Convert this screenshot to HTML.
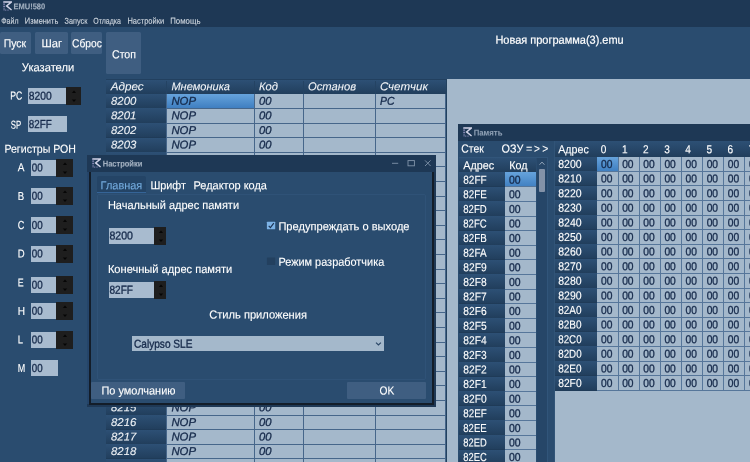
<!DOCTYPE html>
<html><head><meta charset="utf-8"><title>EMU!580</title>
<style>
html,body{margin:0;padding:0;background:#2a4c6f;}
body{width:750px;height:462px;overflow:hidden;position:relative;font-family:"Liberation Sans",sans-serif;}
#r{position:absolute;left:0;top:0;width:750px;height:462px;overflow:hidden;}
#r div,#r svg{position:absolute;}
#r svg.t{left:0;top:0;will-change:transform;font-family:"Liberation Sans",sans-serif;text-rendering:geometricPrecision;white-space:pre;pointer-events:none;}
#r svg.t text{white-space:pre;}
</style></head><body><div id="r">
<div style="left:0.00px;top:0.00px;width:750.00px;height:462.00px;background:#2a4c6f;"></div>
<div style="left:0.00px;top:0.00px;width:750.00px;height:27.00px;background:#1e3855;"></div>
<svg style="left:3.0px;top:1.0px" width="9" height="10" viewBox="0 0 9 10"><path d="M0.3 0.9H8.6L3.6 4.9L8.6 9" fill="none" stroke="#d2d4e8" stroke-width="1.45" stroke-linejoin="miter"/><path d="M1.1 1.6V9.6" stroke="#8d8fba" stroke-width="1.7" stroke-dasharray="0.9 0.8" fill="none"/><path d="M2 9.1H6" stroke="#8d8fba" stroke-width="1" stroke-dasharray="0.9 0.8" fill="none"/></svg>
<div style="left:0.00px;top:32.40px;width:30.80px;height:21.20px;background:#3f5e81;border-radius:1.5px;"></div>
<div style="left:34.50px;top:32.40px;width:33.00px;height:21.20px;background:#3f5e81;border-radius:1.5px;"></div>
<div style="left:71.00px;top:32.40px;width:31.00px;height:21.20px;background:#3f5e81;border-radius:1.5px;"></div>
<div style="left:106.00px;top:32.40px;width:35.00px;height:41.60px;background:#3f5e81;border-radius:1.5px;"></div>
<div style="left:27.90px;top:87.90px;width:38.20px;height:15.90px;background:#a8bbcf;"></div>
<div style="left:66.10px;top:86.70px;width:14.60px;height:18.00px;background:#1e1e1e;"></div>
<svg style="left:70.80px;top:88.70px" width="6" height="14" viewBox="0 0 6 14"><path d="M0.9 4.1L3 1.4L5.1 4.1Z" fill="#060606"/><path d="M0.9 10.4L3 12.9L5.1 10.4Z" fill="#060606"/></svg>
<div style="left:27.90px;top:116.40px;width:39.40px;height:15.60px;background:#a8bbcf;"></div>
<div style="left:30.80px;top:159.70px;width:25.00px;height:16.10px;background:#a8bbcf;"></div>
<div style="left:55.80px;top:158.50px;width:17.10px;height:18.20px;background:#1e1e1e;"></div>
<svg style="left:61.75px;top:160.60px" width="6" height="14" viewBox="0 0 6 14"><path d="M0.9 4.1L3 1.4L5.1 4.1Z" fill="#060606"/><path d="M0.9 10.4L3 12.9L5.1 10.4Z" fill="#060606"/></svg>
<div style="left:30.80px;top:188.00px;width:25.00px;height:16.10px;background:#a8bbcf;"></div>
<div style="left:55.80px;top:186.80px;width:17.10px;height:18.20px;background:#1e1e1e;"></div>
<svg style="left:61.75px;top:188.90px" width="6" height="14" viewBox="0 0 6 14"><path d="M0.9 4.1L3 1.4L5.1 4.1Z" fill="#060606"/><path d="M0.9 10.4L3 12.9L5.1 10.4Z" fill="#060606"/></svg>
<div style="left:30.80px;top:217.10px;width:25.00px;height:16.10px;background:#a8bbcf;"></div>
<div style="left:55.80px;top:215.90px;width:17.10px;height:18.20px;background:#1e1e1e;"></div>
<svg style="left:61.75px;top:218.00px" width="6" height="14" viewBox="0 0 6 14"><path d="M0.9 4.1L3 1.4L5.1 4.1Z" fill="#060606"/><path d="M0.9 10.4L3 12.9L5.1 10.4Z" fill="#060606"/></svg>
<div style="left:30.80px;top:245.70px;width:25.00px;height:16.10px;background:#a8bbcf;"></div>
<div style="left:55.80px;top:244.50px;width:17.10px;height:18.20px;background:#1e1e1e;"></div>
<svg style="left:61.75px;top:246.60px" width="6" height="14" viewBox="0 0 6 14"><path d="M0.9 4.1L3 1.4L5.1 4.1Z" fill="#060606"/><path d="M0.9 10.4L3 12.9L5.1 10.4Z" fill="#060606"/></svg>
<div style="left:30.80px;top:276.80px;width:25.00px;height:16.10px;background:#a8bbcf;"></div>
<div style="left:55.80px;top:275.60px;width:17.10px;height:18.20px;background:#1e1e1e;"></div>
<svg style="left:61.75px;top:277.70px" width="6" height="14" viewBox="0 0 6 14"><path d="M0.9 4.1L3 1.4L5.1 4.1Z" fill="#060606"/><path d="M0.9 10.4L3 12.9L5.1 10.4Z" fill="#060606"/></svg>
<div style="left:30.80px;top:303.00px;width:25.00px;height:16.10px;background:#a8bbcf;"></div>
<div style="left:55.80px;top:301.80px;width:17.10px;height:18.20px;background:#1e1e1e;"></div>
<svg style="left:61.75px;top:303.90px" width="6" height="14" viewBox="0 0 6 14"><path d="M0.9 4.1L3 1.4L5.1 4.1Z" fill="#060606"/><path d="M0.9 10.4L3 12.9L5.1 10.4Z" fill="#060606"/></svg>
<div style="left:30.80px;top:331.70px;width:25.00px;height:16.10px;background:#a8bbcf;"></div>
<div style="left:55.80px;top:330.50px;width:17.10px;height:18.20px;background:#1e1e1e;"></div>
<svg style="left:61.75px;top:332.60px" width="6" height="14" viewBox="0 0 6 14"><path d="M0.9 4.1L3 1.4L5.1 4.1Z" fill="#060606"/><path d="M0.9 10.4L3 12.9L5.1 10.4Z" fill="#060606"/></svg>
<div style="left:30.90px;top:360.30px;width:27.20px;height:15.60px;background:#a8bbcf;"></div>
<div style="left:446.20px;top:78.60px;width:303.80px;height:383.40px;background:#22415f;"></div>
<div style="left:446.50px;top:79.40px;width:303.50px;height:382.60px;background:#a4b8cb;"></div>
<div style="left:106.40px;top:79.70px;width:339.30px;height:382.30px;background:#a4b8cb;"></div>
<div style="left:106.40px;top:79.70px;width:339.30px;height:14.10px;background:linear-gradient(#2d5075,#213e5c);"></div>
<div style="left:106.40px;top:78.90px;width:339.30px;height:0.80px;background:#22405f;"></div>
<div style="left:166.20px;top:80.70px;width:1.00px;height:13.10px;background:#244363;"></div>
<div style="left:254.10px;top:80.70px;width:1.00px;height:13.10px;background:#244363;"></div>
<div style="left:303.00px;top:80.70px;width:1.00px;height:13.10px;background:#244363;"></div>
<div style="left:375.00px;top:80.70px;width:1.00px;height:13.10px;background:#244363;"></div>
<div style="left:106.40px;top:93.80px;width:60.30px;height:14.60px;background:linear-gradient(#2d5075,#213e5c);"></div>
<div style="left:166.70px;top:93.80px;width:87.90px;height:14.60px;background:linear-gradient(#66a3dc,#3f7fc1);"></div>
<div style="left:166.70px;top:107.95px;width:279.00px;height:0.75px;background:#46668a;"></div>
<div style="left:106.40px;top:107.95px;width:60.30px;height:0.75px;background:#1f3b58;"></div>
<div style="left:106.40px;top:108.40px;width:60.30px;height:14.60px;background:linear-gradient(#2d5075,#213e5c);"></div>
<div style="left:166.70px;top:122.55px;width:279.00px;height:0.75px;background:#46668a;"></div>
<div style="left:106.40px;top:122.55px;width:60.30px;height:0.75px;background:#1f3b58;"></div>
<div style="left:106.40px;top:123.00px;width:60.30px;height:14.60px;background:linear-gradient(#2d5075,#213e5c);"></div>
<div style="left:166.70px;top:137.15px;width:279.00px;height:0.75px;background:#46668a;"></div>
<div style="left:106.40px;top:137.15px;width:60.30px;height:0.75px;background:#1f3b58;"></div>
<div style="left:106.40px;top:137.60px;width:60.30px;height:14.60px;background:linear-gradient(#2d5075,#213e5c);"></div>
<div style="left:166.70px;top:151.75px;width:279.00px;height:0.75px;background:#46668a;"></div>
<div style="left:106.40px;top:151.75px;width:60.30px;height:0.75px;background:#1f3b58;"></div>
<div style="left:106.40px;top:152.20px;width:60.30px;height:14.60px;background:linear-gradient(#2d5075,#213e5c);"></div>
<div style="left:106.40px;top:166.35px;width:60.30px;height:0.75px;background:#1f3b58;"></div>
<div style="left:166.70px;top:166.35px;width:279.00px;height:0.75px;background:#46668a;"></div>
<div style="left:106.40px;top:166.80px;width:60.30px;height:14.60px;background:linear-gradient(#2d5075,#213e5c);"></div>
<div style="left:106.40px;top:180.95px;width:60.30px;height:0.75px;background:#1f3b58;"></div>
<div style="left:166.70px;top:180.95px;width:279.00px;height:0.75px;background:#46668a;"></div>
<div style="left:106.40px;top:181.40px;width:60.30px;height:14.60px;background:linear-gradient(#2d5075,#213e5c);"></div>
<div style="left:106.40px;top:195.55px;width:60.30px;height:0.75px;background:#1f3b58;"></div>
<div style="left:166.70px;top:195.55px;width:279.00px;height:0.75px;background:#46668a;"></div>
<div style="left:106.40px;top:196.00px;width:60.30px;height:14.60px;background:linear-gradient(#2d5075,#213e5c);"></div>
<div style="left:106.40px;top:210.15px;width:60.30px;height:0.75px;background:#1f3b58;"></div>
<div style="left:166.70px;top:210.15px;width:279.00px;height:0.75px;background:#46668a;"></div>
<div style="left:106.40px;top:210.60px;width:60.30px;height:14.60px;background:linear-gradient(#2d5075,#213e5c);"></div>
<div style="left:106.40px;top:224.75px;width:60.30px;height:0.75px;background:#1f3b58;"></div>
<div style="left:166.70px;top:224.75px;width:279.00px;height:0.75px;background:#46668a;"></div>
<div style="left:106.40px;top:225.20px;width:60.30px;height:14.60px;background:linear-gradient(#2d5075,#213e5c);"></div>
<div style="left:106.40px;top:239.35px;width:60.30px;height:0.75px;background:#1f3b58;"></div>
<div style="left:166.70px;top:239.35px;width:279.00px;height:0.75px;background:#46668a;"></div>
<div style="left:106.40px;top:239.80px;width:60.30px;height:14.60px;background:linear-gradient(#2d5075,#213e5c);"></div>
<div style="left:106.40px;top:253.95px;width:60.30px;height:0.75px;background:#1f3b58;"></div>
<div style="left:166.70px;top:253.95px;width:279.00px;height:0.75px;background:#46668a;"></div>
<div style="left:106.40px;top:254.40px;width:60.30px;height:14.60px;background:linear-gradient(#2d5075,#213e5c);"></div>
<div style="left:106.40px;top:268.55px;width:60.30px;height:0.75px;background:#1f3b58;"></div>
<div style="left:166.70px;top:268.55px;width:279.00px;height:0.75px;background:#46668a;"></div>
<div style="left:106.40px;top:269.00px;width:60.30px;height:14.60px;background:linear-gradient(#2d5075,#213e5c);"></div>
<div style="left:106.40px;top:283.15px;width:60.30px;height:0.75px;background:#1f3b58;"></div>
<div style="left:166.70px;top:283.15px;width:279.00px;height:0.75px;background:#46668a;"></div>
<div style="left:106.40px;top:283.60px;width:60.30px;height:14.60px;background:linear-gradient(#2d5075,#213e5c);"></div>
<div style="left:106.40px;top:297.75px;width:60.30px;height:0.75px;background:#1f3b58;"></div>
<div style="left:166.70px;top:297.75px;width:279.00px;height:0.75px;background:#46668a;"></div>
<div style="left:106.40px;top:298.20px;width:60.30px;height:14.60px;background:linear-gradient(#2d5075,#213e5c);"></div>
<div style="left:106.40px;top:312.35px;width:60.30px;height:0.75px;background:#1f3b58;"></div>
<div style="left:166.70px;top:312.35px;width:279.00px;height:0.75px;background:#46668a;"></div>
<div style="left:106.40px;top:312.80px;width:60.30px;height:14.60px;background:linear-gradient(#2d5075,#213e5c);"></div>
<div style="left:106.40px;top:326.95px;width:60.30px;height:0.75px;background:#1f3b58;"></div>
<div style="left:166.70px;top:326.95px;width:279.00px;height:0.75px;background:#46668a;"></div>
<div style="left:106.40px;top:327.40px;width:60.30px;height:14.60px;background:linear-gradient(#2d5075,#213e5c);"></div>
<div style="left:106.40px;top:341.55px;width:60.30px;height:0.75px;background:#1f3b58;"></div>
<div style="left:166.70px;top:341.55px;width:279.00px;height:0.75px;background:#46668a;"></div>
<div style="left:106.40px;top:342.00px;width:60.30px;height:14.60px;background:linear-gradient(#2d5075,#213e5c);"></div>
<div style="left:106.40px;top:356.15px;width:60.30px;height:0.75px;background:#1f3b58;"></div>
<div style="left:166.70px;top:356.15px;width:279.00px;height:0.75px;background:#46668a;"></div>
<div style="left:106.40px;top:356.60px;width:60.30px;height:14.60px;background:linear-gradient(#2d5075,#213e5c);"></div>
<div style="left:106.40px;top:370.75px;width:60.30px;height:0.75px;background:#1f3b58;"></div>
<div style="left:166.70px;top:370.75px;width:279.00px;height:0.75px;background:#46668a;"></div>
<div style="left:106.40px;top:371.20px;width:60.30px;height:14.60px;background:linear-gradient(#2d5075,#213e5c);"></div>
<div style="left:106.40px;top:385.35px;width:60.30px;height:0.75px;background:#1f3b58;"></div>
<div style="left:166.70px;top:385.35px;width:279.00px;height:0.75px;background:#46668a;"></div>
<div style="left:106.40px;top:385.80px;width:60.30px;height:14.60px;background:linear-gradient(#2d5075,#213e5c);"></div>
<div style="left:106.40px;top:399.95px;width:60.30px;height:0.75px;background:#1f3b58;"></div>
<div style="left:166.70px;top:399.95px;width:279.00px;height:0.75px;background:#46668a;"></div>
<div style="left:106.40px;top:400.40px;width:60.30px;height:14.60px;background:linear-gradient(#2d5075,#213e5c);"></div>
<div style="left:166.70px;top:414.55px;width:279.00px;height:0.75px;background:#46668a;"></div>
<div style="left:106.40px;top:414.55px;width:60.30px;height:0.75px;background:#1f3b58;"></div>
<div style="left:106.40px;top:415.00px;width:60.30px;height:14.60px;background:linear-gradient(#2d5075,#213e5c);"></div>
<div style="left:166.70px;top:429.15px;width:279.00px;height:0.75px;background:#46668a;"></div>
<div style="left:106.40px;top:429.15px;width:60.30px;height:0.75px;background:#1f3b58;"></div>
<div style="left:106.40px;top:429.60px;width:60.30px;height:14.60px;background:linear-gradient(#2d5075,#213e5c);"></div>
<div style="left:166.70px;top:443.75px;width:279.00px;height:0.75px;background:#46668a;"></div>
<div style="left:106.40px;top:443.75px;width:60.30px;height:0.75px;background:#1f3b58;"></div>
<div style="left:106.40px;top:444.20px;width:60.30px;height:14.60px;background:linear-gradient(#2d5075,#213e5c);"></div>
<div style="left:166.70px;top:458.35px;width:279.00px;height:0.75px;background:#46668a;"></div>
<div style="left:106.40px;top:458.35px;width:60.30px;height:0.75px;background:#1f3b58;"></div>
<div style="left:106.40px;top:458.80px;width:60.30px;height:14.60px;background:linear-gradient(#2d5075,#213e5c);"></div>
<div style="left:106.40px;top:472.95px;width:60.30px;height:0.75px;background:#1f3b58;"></div>
<div style="left:166.70px;top:472.95px;width:279.00px;height:0.75px;background:#46668a;"></div>
<div style="left:106.40px;top:473.40px;width:60.30px;height:14.60px;background:linear-gradient(#2d5075,#213e5c);"></div>
<div style="left:106.40px;top:487.55px;width:60.30px;height:0.75px;background:#1f3b58;"></div>
<div style="left:166.70px;top:487.55px;width:279.00px;height:0.75px;background:#46668a;"></div>
<div style="left:166.30px;top:93.80px;width:0.75px;height:368.20px;background:#46668a;"></div>
<div style="left:254.20px;top:93.80px;width:0.75px;height:368.20px;background:#46668a;"></div>
<div style="left:303.10px;top:93.80px;width:0.75px;height:368.20px;background:#46668a;"></div>
<div style="left:375.10px;top:93.80px;width:0.75px;height:368.20px;background:#46668a;"></div>
<div style="left:445.30px;top:93.80px;width:0.75px;height:368.20px;background:#46668a;"></div>
<svg class="t" width="750" height="462" viewBox="0 0 750 462"><text transform="matrix(0.8963,0.0005,0,1,13.50,9.29)" font-size="8.40" fill="#a3b1c1" font-weight="bold" stroke="#a3b1c1" stroke-width="0.12">EMU!580</text><text transform="matrix(0.8135,0.0005,0,1,1.30,23.66)" font-size="8.60" fill="#d3dae2" stroke="#d3dae2" stroke-width="0.10">Файл</text><text transform="matrix(0.8635,0.0005,0,1,24.80,23.66)" font-size="8.60" fill="#d3dae2" stroke="#d3dae2" stroke-width="0.10">Изменить</text><text transform="matrix(0.8476,0.0005,0,1,64.60,23.66)" font-size="8.60" fill="#d3dae2" stroke="#d3dae2" stroke-width="0.10">Запуск</text><text transform="matrix(0.8178,0.0005,0,1,93.20,23.66)" font-size="8.60" fill="#d3dae2" stroke="#d3dae2" stroke-width="0.10">Отладка</text><text transform="matrix(0.8727,0.0005,0,1,127.40,23.66)" font-size="8.60" fill="#d3dae2" stroke="#d3dae2" stroke-width="0.10">Настройки</text><text transform="matrix(0.9122,0.0005,0,1,170.20,23.66)" font-size="8.60" fill="#d3dae2" stroke="#d3dae2" stroke-width="0.10">Помощь</text><text transform="matrix(0.9002,0.0005,0,1,3.70,47.19)" font-size="11.60" fill="#fff" stroke="#fff" stroke-width="0.12">Пуск</text><text transform="matrix(0.9665,0.0005,0,1,41.40,47.19)" font-size="11.60" fill="#fff" stroke="#fff" stroke-width="0.12">Шаг</text><text transform="matrix(0.8836,0.0005,0,1,72.00,47.19)" font-size="11.60" fill="#fff" stroke="#fff" stroke-width="0.12">Сброс</text><text transform="matrix(0.9128,0.0005,0,1,112.00,58.29)" font-size="11.60" fill="#fff" stroke="#fff" stroke-width="0.12">Стоп</text><text transform="matrix(0.9476,0.0005,0,1,495.40,43.69)" font-size="11.60" fill="#fff" stroke="#fff" stroke-width="0.20">Новая программа(3).emu</text><text transform="matrix(0.9613,0.0005,0,1,21.80,71.29)" font-size="11.60" fill="#fff" stroke="#fff" stroke-width="0.12">Указатели</text><text transform="matrix(0.9120,0.0005,0,1,4.40,152.79)" font-size="11.60" fill="#fff" stroke="#fff" stroke-width="0.12">Регистры РОН</text><text transform="matrix(0.7509,0.0005,0,1,10.20,99.49)" font-size="11.60" fill="#fff" stroke="#fff" stroke-width="0.12">PC</text><text transform="matrix(0.8874,0.0005,0,1,28.80,99.64)" font-size="11.60" fill="#15294a" stroke="#15294a" stroke-width="0.34">8200</text><text transform="matrix(0.6720,0.0005,0,1,10.80,128.79)" font-size="11.60" fill="#fff" stroke="#fff" stroke-width="0.12">SP</text><text transform="matrix(0.8458,0.0005,0,1,28.80,127.99)" font-size="11.60" fill="#15294a" stroke="#15294a" stroke-width="0.34">82FF</text><text transform="matrix(0.8659,0.0005,0,1,17.70,171.29)" font-size="11.60" fill="#fff" stroke="#fff" stroke-width="0.12">A</text><text transform="matrix(0.8448,0.0005,0,1,31.70,171.54)" font-size="11.60" fill="#15294a" stroke="#15294a" stroke-width="0.34">00</text><text transform="matrix(0.8271,0.0005,0,1,17.70,199.89)" font-size="11.60" fill="#fff" stroke="#fff" stroke-width="0.12">B</text><text transform="matrix(0.8448,0.0005,0,1,31.70,199.84)" font-size="11.60" fill="#15294a" stroke="#15294a" stroke-width="0.34">00</text><text transform="matrix(0.7878,0.0005,0,1,17.70,228.99)" font-size="11.60" fill="#fff" stroke="#fff" stroke-width="0.12">C</text><text transform="matrix(0.8448,0.0005,0,1,31.70,228.94)" font-size="11.60" fill="#15294a" stroke="#15294a" stroke-width="0.34">00</text><text transform="matrix(0.8236,0.0005,0,1,17.70,257.59)" font-size="11.60" fill="#fff" stroke="#fff" stroke-width="0.12">D</text><text transform="matrix(0.8448,0.0005,0,1,31.70,257.54)" font-size="11.60" fill="#15294a" stroke="#15294a" stroke-width="0.34">00</text><text transform="matrix(0.7625,0.0005,0,1,17.70,286.59)" font-size="11.60" fill="#fff" stroke="#fff" stroke-width="0.12">E</text><text transform="matrix(0.8448,0.0005,0,1,31.70,288.64)" font-size="11.60" fill="#15294a" stroke="#15294a" stroke-width="0.34">00</text><text transform="matrix(0.8714,0.0005,0,1,17.70,314.99)" font-size="11.60" fill="#fff" stroke="#fff" stroke-width="0.12">H</text><text transform="matrix(0.8448,0.0005,0,1,31.70,314.84)" font-size="11.60" fill="#15294a" stroke="#15294a" stroke-width="0.34">00</text><text transform="matrix(0.8215,0.0005,0,1,17.70,343.39)" font-size="11.60" fill="#fff" stroke="#fff" stroke-width="0.12">L</text><text transform="matrix(0.8448,0.0005,0,1,31.70,343.54)" font-size="11.60" fill="#15294a" stroke="#15294a" stroke-width="0.34">00</text><text transform="matrix(0.7761,0.0005,0,1,17.70,372.09)" font-size="11.60" fill="#fff" stroke="#fff" stroke-width="0.12">M</text><text transform="matrix(0.8370,0.0005,0,1,31.80,371.89)" font-size="11.60" fill="#15294a" stroke="#15294a" stroke-width="0.34">00</text><text transform="matrix(1.0353,0.0005,0,1,110.70,90.19)" font-size="11.30" fill="#f2f5f8" font-style="italic" stroke="#f2f5f8" stroke-width="0.08">Адрес</text><text transform="matrix(0.9776,0.0005,0,1,171.40,90.19)" font-size="11.30" fill="#f2f5f8" font-style="italic" stroke="#f2f5f8" stroke-width="0.08">Мнемоника</text><text transform="matrix(0.9901,0.0005,0,1,259.00,90.19)" font-size="11.30" fill="#f2f5f8" font-style="italic" stroke="#f2f5f8" stroke-width="0.08">Код</text><text transform="matrix(0.9915,0.0005,0,1,308.00,90.19)" font-size="11.30" fill="#f2f5f8" font-style="italic" stroke="#f2f5f8" stroke-width="0.08">Останов</text><text transform="matrix(1.0256,0.0005,0,1,380.00,90.19)" font-size="11.30" fill="#f2f5f8" font-style="italic" stroke="#f2f5f8" stroke-width="0.08">Счетчик</text><text transform="matrix(1.0064,0.0005,0,1,111.00,104.69)" font-size="11.30" fill="#f2f5f8" font-style="italic" stroke="#f2f5f8" stroke-width="0.08">8200</text><text transform="matrix(1.0046,0.0005,0,1,171.40,104.69)" font-size="11.30" fill="#15294a" font-style="italic" stroke="#15294a" stroke-width="0.30">NOP</text><text transform="matrix(0.9945,0.0005,0,1,259.00,104.69)" font-size="11.30" fill="#15294a" font-style="italic" stroke="#15294a" stroke-width="0.30">00</text><text transform="matrix(0.9237,0.0005,0,1,380.00,104.69)" font-size="11.30" fill="#15294a" font-style="italic" stroke="#15294a" stroke-width="0.30">PC</text><text transform="matrix(1.0064,0.0005,0,1,111.00,119.29)" font-size="11.30" fill="#f2f5f8" font-style="italic" stroke="#f2f5f8" stroke-width="0.08">8201</text><text transform="matrix(1.0046,0.0005,0,1,171.40,119.29)" font-size="11.30" fill="#15294a" font-style="italic" stroke="#15294a" stroke-width="0.30">NOP</text><text transform="matrix(0.9945,0.0005,0,1,259.00,119.29)" font-size="11.30" fill="#15294a" font-style="italic" stroke="#15294a" stroke-width="0.30">00</text><text transform="matrix(1.0064,0.0005,0,1,111.00,133.89)" font-size="11.30" fill="#f2f5f8" font-style="italic" stroke="#f2f5f8" stroke-width="0.08">8202</text><text transform="matrix(1.0046,0.0005,0,1,171.40,133.89)" font-size="11.30" fill="#15294a" font-style="italic" stroke="#15294a" stroke-width="0.30">NOP</text><text transform="matrix(0.9945,0.0005,0,1,259.00,133.89)" font-size="11.30" fill="#15294a" font-style="italic" stroke="#15294a" stroke-width="0.30">00</text><text transform="matrix(1.0064,0.0005,0,1,111.00,148.49)" font-size="11.30" fill="#f2f5f8" font-style="italic" stroke="#f2f5f8" stroke-width="0.08">8203</text><text transform="matrix(1.0046,0.0005,0,1,171.40,148.49)" font-size="11.30" fill="#15294a" font-style="italic" stroke="#15294a" stroke-width="0.30">NOP</text><text transform="matrix(0.9945,0.0005,0,1,259.00,148.49)" font-size="11.30" fill="#15294a" font-style="italic" stroke="#15294a" stroke-width="0.30">00</text><text transform="matrix(1.0064,0.0005,0,1,111.00,411.29)" font-size="11.30" fill="#f2f5f8" font-style="italic" stroke="#f2f5f8" stroke-width="0.08">8215</text><text transform="matrix(1.0046,0.0005,0,1,171.40,411.29)" font-size="11.30" fill="#15294a" font-style="italic" stroke="#15294a" stroke-width="0.30">NOP</text><text transform="matrix(0.9945,0.0005,0,1,259.00,411.29)" font-size="11.30" fill="#15294a" font-style="italic" stroke="#15294a" stroke-width="0.30">00</text><text transform="matrix(1.0064,0.0005,0,1,111.00,425.89)" font-size="11.30" fill="#f2f5f8" font-style="italic" stroke="#f2f5f8" stroke-width="0.08">8216</text><text transform="matrix(1.0046,0.0005,0,1,171.40,425.89)" font-size="11.30" fill="#15294a" font-style="italic" stroke="#15294a" stroke-width="0.30">NOP</text><text transform="matrix(0.9945,0.0005,0,1,259.00,425.89)" font-size="11.30" fill="#15294a" font-style="italic" stroke="#15294a" stroke-width="0.30">00</text><text transform="matrix(1.0064,0.0005,0,1,111.00,440.49)" font-size="11.30" fill="#f2f5f8" font-style="italic" stroke="#f2f5f8" stroke-width="0.08">8217</text><text transform="matrix(1.0046,0.0005,0,1,171.40,440.49)" font-size="11.30" fill="#15294a" font-style="italic" stroke="#15294a" stroke-width="0.30">NOP</text><text transform="matrix(0.9945,0.0005,0,1,259.00,440.49)" font-size="11.30" fill="#15294a" font-style="italic" stroke="#15294a" stroke-width="0.30">00</text><text transform="matrix(1.0064,0.0005,0,1,111.00,455.09)" font-size="11.30" fill="#f2f5f8" font-style="italic" stroke="#f2f5f8" stroke-width="0.08">8218</text><text transform="matrix(1.0046,0.0005,0,1,171.40,455.09)" font-size="11.30" fill="#15294a" font-style="italic" stroke="#15294a" stroke-width="0.30">NOP</text><text transform="matrix(0.9945,0.0005,0,1,259.00,455.09)" font-size="11.30" fill="#15294a" font-style="italic" stroke="#15294a" stroke-width="0.30">00</text></svg>
<div style="left:458.10px;top:123.50px;width:291.90px;height:338.50px;background:#2a4c6f;"></div>
<div style="left:458.10px;top:123.50px;width:291.90px;height:17.50px;background:#1e3855;"></div>
<svg style="left:462.5px;top:127.3px" width="9" height="10" viewBox="0 0 9 10"><path d="M0.3 0.9H8.6L3.6 4.9L8.6 9" fill="none" stroke="#d2d4e8" stroke-width="1.45" stroke-linejoin="miter"/><path d="M1.1 1.6V9.6" stroke="#8d8fba" stroke-width="1.7" stroke-dasharray="0.9 0.8" fill="none"/><path d="M2 9.1H6" stroke="#8d8fba" stroke-width="1" stroke-dasharray="0.9 0.8" fill="none"/></svg>
<div style="left:459.20px;top:158.20px;width:77.20px;height:303.80px;background:#a4b8cb;"></div>
<div style="left:459.20px;top:158.20px;width:77.20px;height:14.00px;background:linear-gradient(#2d5075,#213e5c);"></div>
<div style="left:459.20px;top:172.20px;width:46.20px;height:14.60px;background:linear-gradient(#2d5075,#213e5c);"></div>
<div style="left:505.40px;top:172.20px;width:31.00px;height:14.60px;background:linear-gradient(#66a3dc,#3f7fc1);"></div>
<div style="left:505.40px;top:186.35px;width:31.00px;height:0.75px;background:#56769a;"></div>
<div style="left:459.20px;top:186.35px;width:46.20px;height:0.75px;background:#1f3b58;"></div>
<div style="left:459.20px;top:186.80px;width:46.20px;height:14.60px;background:linear-gradient(#2d5075,#213e5c);"></div>
<div style="left:505.40px;top:200.95px;width:31.00px;height:0.75px;background:#56769a;"></div>
<div style="left:459.20px;top:200.95px;width:46.20px;height:0.75px;background:#1f3b58;"></div>
<div style="left:459.20px;top:201.40px;width:46.20px;height:14.60px;background:linear-gradient(#2d5075,#213e5c);"></div>
<div style="left:505.40px;top:215.55px;width:31.00px;height:0.75px;background:#56769a;"></div>
<div style="left:459.20px;top:215.55px;width:46.20px;height:0.75px;background:#1f3b58;"></div>
<div style="left:459.20px;top:216.00px;width:46.20px;height:14.60px;background:linear-gradient(#2d5075,#213e5c);"></div>
<div style="left:505.40px;top:230.15px;width:31.00px;height:0.75px;background:#56769a;"></div>
<div style="left:459.20px;top:230.15px;width:46.20px;height:0.75px;background:#1f3b58;"></div>
<div style="left:459.20px;top:230.60px;width:46.20px;height:14.60px;background:linear-gradient(#2d5075,#213e5c);"></div>
<div style="left:505.40px;top:244.75px;width:31.00px;height:0.75px;background:#56769a;"></div>
<div style="left:459.20px;top:244.75px;width:46.20px;height:0.75px;background:#1f3b58;"></div>
<div style="left:459.20px;top:245.20px;width:46.20px;height:14.60px;background:linear-gradient(#2d5075,#213e5c);"></div>
<div style="left:505.40px;top:259.35px;width:31.00px;height:0.75px;background:#56769a;"></div>
<div style="left:459.20px;top:259.35px;width:46.20px;height:0.75px;background:#1f3b58;"></div>
<div style="left:459.20px;top:259.80px;width:46.20px;height:14.60px;background:linear-gradient(#2d5075,#213e5c);"></div>
<div style="left:505.40px;top:273.95px;width:31.00px;height:0.75px;background:#56769a;"></div>
<div style="left:459.20px;top:273.95px;width:46.20px;height:0.75px;background:#1f3b58;"></div>
<div style="left:459.20px;top:274.40px;width:46.20px;height:14.60px;background:linear-gradient(#2d5075,#213e5c);"></div>
<div style="left:505.40px;top:288.55px;width:31.00px;height:0.75px;background:#56769a;"></div>
<div style="left:459.20px;top:288.55px;width:46.20px;height:0.75px;background:#1f3b58;"></div>
<div style="left:459.20px;top:289.00px;width:46.20px;height:14.60px;background:linear-gradient(#2d5075,#213e5c);"></div>
<div style="left:505.40px;top:303.15px;width:31.00px;height:0.75px;background:#56769a;"></div>
<div style="left:459.20px;top:303.15px;width:46.20px;height:0.75px;background:#1f3b58;"></div>
<div style="left:459.20px;top:303.60px;width:46.20px;height:14.60px;background:linear-gradient(#2d5075,#213e5c);"></div>
<div style="left:505.40px;top:317.75px;width:31.00px;height:0.75px;background:#56769a;"></div>
<div style="left:459.20px;top:317.75px;width:46.20px;height:0.75px;background:#1f3b58;"></div>
<div style="left:459.20px;top:318.20px;width:46.20px;height:14.60px;background:linear-gradient(#2d5075,#213e5c);"></div>
<div style="left:505.40px;top:332.35px;width:31.00px;height:0.75px;background:#56769a;"></div>
<div style="left:459.20px;top:332.35px;width:46.20px;height:0.75px;background:#1f3b58;"></div>
<div style="left:459.20px;top:332.80px;width:46.20px;height:14.60px;background:linear-gradient(#2d5075,#213e5c);"></div>
<div style="left:505.40px;top:346.95px;width:31.00px;height:0.75px;background:#56769a;"></div>
<div style="left:459.20px;top:346.95px;width:46.20px;height:0.75px;background:#1f3b58;"></div>
<div style="left:459.20px;top:347.40px;width:46.20px;height:14.60px;background:linear-gradient(#2d5075,#213e5c);"></div>
<div style="left:505.40px;top:361.55px;width:31.00px;height:0.75px;background:#56769a;"></div>
<div style="left:459.20px;top:361.55px;width:46.20px;height:0.75px;background:#1f3b58;"></div>
<div style="left:459.20px;top:362.00px;width:46.20px;height:14.60px;background:linear-gradient(#2d5075,#213e5c);"></div>
<div style="left:505.40px;top:376.15px;width:31.00px;height:0.75px;background:#56769a;"></div>
<div style="left:459.20px;top:376.15px;width:46.20px;height:0.75px;background:#1f3b58;"></div>
<div style="left:459.20px;top:376.60px;width:46.20px;height:14.60px;background:linear-gradient(#2d5075,#213e5c);"></div>
<div style="left:505.40px;top:390.75px;width:31.00px;height:0.75px;background:#56769a;"></div>
<div style="left:459.20px;top:390.75px;width:46.20px;height:0.75px;background:#1f3b58;"></div>
<div style="left:459.20px;top:391.20px;width:46.20px;height:14.60px;background:linear-gradient(#2d5075,#213e5c);"></div>
<div style="left:505.40px;top:405.35px;width:31.00px;height:0.75px;background:#56769a;"></div>
<div style="left:459.20px;top:405.35px;width:46.20px;height:0.75px;background:#1f3b58;"></div>
<div style="left:459.20px;top:405.80px;width:46.20px;height:14.60px;background:linear-gradient(#2d5075,#213e5c);"></div>
<div style="left:505.40px;top:419.95px;width:31.00px;height:0.75px;background:#56769a;"></div>
<div style="left:459.20px;top:419.95px;width:46.20px;height:0.75px;background:#1f3b58;"></div>
<div style="left:459.20px;top:420.40px;width:46.20px;height:14.60px;background:linear-gradient(#2d5075,#213e5c);"></div>
<div style="left:505.40px;top:434.55px;width:31.00px;height:0.75px;background:#56769a;"></div>
<div style="left:459.20px;top:434.55px;width:46.20px;height:0.75px;background:#1f3b58;"></div>
<div style="left:459.20px;top:435.00px;width:46.20px;height:14.60px;background:linear-gradient(#2d5075,#213e5c);"></div>
<div style="left:505.40px;top:449.15px;width:31.00px;height:0.75px;background:#56769a;"></div>
<div style="left:459.20px;top:449.15px;width:46.20px;height:0.75px;background:#1f3b58;"></div>
<div style="left:459.20px;top:449.60px;width:46.20px;height:14.60px;background:linear-gradient(#2d5075,#213e5c);"></div>
<div style="left:505.40px;top:463.75px;width:31.00px;height:0.75px;background:#56769a;"></div>
<div style="left:459.20px;top:463.75px;width:46.20px;height:0.75px;background:#1f3b58;"></div>
<div style="left:459.20px;top:464.20px;width:46.20px;height:14.60px;background:linear-gradient(#2d5075,#213e5c);"></div>
<div style="left:505.40px;top:478.35px;width:31.00px;height:0.75px;background:#56769a;"></div>
<div style="left:459.20px;top:478.35px;width:46.20px;height:0.75px;background:#1f3b58;"></div>
<div style="left:536.50px;top:158.20px;width:10.70px;height:303.80px;background:#264668;"></div>
<div style="left:459.20px;top:157.20px;width:88.00px;height:0.90px;background:#31557a;"></div>
<div style="left:546.60px;top:157.20px;width:0.80px;height:304.80px;background:#31557a;"></div>
<svg style="left:538.6px;top:160.6px" width="6" height="5" viewBox="0 0 6 5"><path d="M0.6 3.7L3 1.1L5.4 3.7" fill="none" stroke="#a4b4c6" stroke-width="0.9"/></svg>
<div style="left:539.00px;top:168.80px;width:6.00px;height:22.80px;background:#8392a8;border-radius:1px;"></div>
<div style="left:553.60px;top:140.60px;width:1.20px;height:321.40px;background:#315477;"></div>
<div style="left:554.80px;top:141.00px;width:195.20px;height:250.20px;background:#a4b8cb;"></div>
<div style="left:554.80px;top:141.00px;width:195.20px;height:15.60px;background:linear-gradient(#2d5075,#213e5c);"></div>
<div style="left:554.80px;top:391.20px;width:195.20px;height:70.80px;background:#a4b8cb;"></div>
<div style="left:554.80px;top:156.60px;width:42.00px;height:14.60px;background:linear-gradient(#2d5075,#213e5c);"></div>
<div style="left:596.80px;top:156.60px;width:21.13px;height:14.60px;background:linear-gradient(#66a3dc,#3f7fc1);"></div>
<div style="left:596.80px;top:170.75px;width:153.20px;height:0.75px;background:#56769a;"></div>
<div style="left:554.80px;top:170.75px;width:42.00px;height:0.75px;background:#1f3b58;"></div>
<div style="left:554.80px;top:171.20px;width:42.00px;height:14.60px;background:linear-gradient(#2d5075,#213e5c);"></div>
<div style="left:596.80px;top:185.35px;width:153.20px;height:0.75px;background:#56769a;"></div>
<div style="left:554.80px;top:185.35px;width:42.00px;height:0.75px;background:#1f3b58;"></div>
<div style="left:554.80px;top:185.80px;width:42.00px;height:14.60px;background:linear-gradient(#2d5075,#213e5c);"></div>
<div style="left:596.80px;top:199.95px;width:153.20px;height:0.75px;background:#56769a;"></div>
<div style="left:554.80px;top:199.95px;width:42.00px;height:0.75px;background:#1f3b58;"></div>
<div style="left:554.80px;top:200.40px;width:42.00px;height:14.60px;background:linear-gradient(#2d5075,#213e5c);"></div>
<div style="left:596.80px;top:214.55px;width:153.20px;height:0.75px;background:#56769a;"></div>
<div style="left:554.80px;top:214.55px;width:42.00px;height:0.75px;background:#1f3b58;"></div>
<div style="left:554.80px;top:215.00px;width:42.00px;height:14.60px;background:linear-gradient(#2d5075,#213e5c);"></div>
<div style="left:596.80px;top:229.15px;width:153.20px;height:0.75px;background:#56769a;"></div>
<div style="left:554.80px;top:229.15px;width:42.00px;height:0.75px;background:#1f3b58;"></div>
<div style="left:554.80px;top:229.60px;width:42.00px;height:14.60px;background:linear-gradient(#2d5075,#213e5c);"></div>
<div style="left:596.80px;top:243.75px;width:153.20px;height:0.75px;background:#56769a;"></div>
<div style="left:554.80px;top:243.75px;width:42.00px;height:0.75px;background:#1f3b58;"></div>
<div style="left:554.80px;top:244.20px;width:42.00px;height:14.60px;background:linear-gradient(#2d5075,#213e5c);"></div>
<div style="left:596.80px;top:258.35px;width:153.20px;height:0.75px;background:#56769a;"></div>
<div style="left:554.80px;top:258.35px;width:42.00px;height:0.75px;background:#1f3b58;"></div>
<div style="left:554.80px;top:258.80px;width:42.00px;height:14.60px;background:linear-gradient(#2d5075,#213e5c);"></div>
<div style="left:596.80px;top:272.95px;width:153.20px;height:0.75px;background:#56769a;"></div>
<div style="left:554.80px;top:272.95px;width:42.00px;height:0.75px;background:#1f3b58;"></div>
<div style="left:554.80px;top:273.40px;width:42.00px;height:14.60px;background:linear-gradient(#2d5075,#213e5c);"></div>
<div style="left:596.80px;top:287.55px;width:153.20px;height:0.75px;background:#56769a;"></div>
<div style="left:554.80px;top:287.55px;width:42.00px;height:0.75px;background:#1f3b58;"></div>
<div style="left:554.80px;top:288.00px;width:42.00px;height:14.60px;background:linear-gradient(#2d5075,#213e5c);"></div>
<div style="left:596.80px;top:302.15px;width:153.20px;height:0.75px;background:#56769a;"></div>
<div style="left:554.80px;top:302.15px;width:42.00px;height:0.75px;background:#1f3b58;"></div>
<div style="left:554.80px;top:302.60px;width:42.00px;height:14.60px;background:linear-gradient(#2d5075,#213e5c);"></div>
<div style="left:596.80px;top:316.75px;width:153.20px;height:0.75px;background:#56769a;"></div>
<div style="left:554.80px;top:316.75px;width:42.00px;height:0.75px;background:#1f3b58;"></div>
<div style="left:554.80px;top:317.20px;width:42.00px;height:14.60px;background:linear-gradient(#2d5075,#213e5c);"></div>
<div style="left:596.80px;top:331.35px;width:153.20px;height:0.75px;background:#56769a;"></div>
<div style="left:554.80px;top:331.35px;width:42.00px;height:0.75px;background:#1f3b58;"></div>
<div style="left:554.80px;top:331.80px;width:42.00px;height:14.60px;background:linear-gradient(#2d5075,#213e5c);"></div>
<div style="left:596.80px;top:345.95px;width:153.20px;height:0.75px;background:#56769a;"></div>
<div style="left:554.80px;top:345.95px;width:42.00px;height:0.75px;background:#1f3b58;"></div>
<div style="left:554.80px;top:346.40px;width:42.00px;height:14.60px;background:linear-gradient(#2d5075,#213e5c);"></div>
<div style="left:596.80px;top:360.55px;width:153.20px;height:0.75px;background:#56769a;"></div>
<div style="left:554.80px;top:360.55px;width:42.00px;height:0.75px;background:#1f3b58;"></div>
<div style="left:554.80px;top:361.00px;width:42.00px;height:14.60px;background:linear-gradient(#2d5075,#213e5c);"></div>
<div style="left:596.80px;top:375.15px;width:153.20px;height:0.75px;background:#56769a;"></div>
<div style="left:554.80px;top:375.15px;width:42.00px;height:0.75px;background:#1f3b58;"></div>
<div style="left:554.80px;top:375.60px;width:42.00px;height:14.60px;background:linear-gradient(#2d5075,#213e5c);"></div>
<div style="left:596.80px;top:389.75px;width:153.20px;height:0.75px;background:#56769a;"></div>
<div style="left:554.80px;top:389.75px;width:42.00px;height:0.75px;background:#1f3b58;"></div>
<div style="left:617.53px;top:156.60px;width:0.75px;height:234.20px;background:#56769a;"></div>
<div style="left:638.66px;top:156.60px;width:0.75px;height:234.20px;background:#56769a;"></div>
<div style="left:659.79px;top:156.60px;width:0.75px;height:234.20px;background:#56769a;"></div>
<div style="left:680.92px;top:156.60px;width:0.75px;height:234.20px;background:#56769a;"></div>
<div style="left:702.05px;top:156.60px;width:0.75px;height:234.20px;background:#56769a;"></div>
<div style="left:723.18px;top:156.60px;width:0.75px;height:234.20px;background:#56769a;"></div>
<div style="left:744.31px;top:156.60px;width:0.75px;height:234.20px;background:#56769a;"></div>
<svg class="t" width="750" height="462" viewBox="0 0 750 462"><text transform="matrix(0.9260,0.0005,0,1,473.70,135.49)" font-size="8.40" fill="#8b9db2" font-weight="bold" stroke="#8b9db2" stroke-width="0.12">Память</text><text transform="matrix(0.8969,0.0005,0,1,461.30,152.59)" font-size="11.60" fill="#fff" stroke="#fff" stroke-width="0.12">Стек</text><text transform="matrix(0.9326,0.0005,0,1,501.60,152.59)" font-size="11.60" fill="#fff" stroke="#fff" stroke-width="0.12">ОЗУ</text><text transform="matrix(0.9300,0.0005,0,1,525.90,152.39)" font-size="11.60" fill="#fff" stroke="#fff" stroke-width="0.05">=</text><text transform="matrix(0.8709,0.0005,0,1,533.90,152.39)" font-size="11.60" fill="#fff" stroke="#fff" stroke-width="0.05">&gt;</text><text transform="matrix(0.8857,0.0005,0,1,542.30,152.39)" font-size="11.60" fill="#fff" stroke="#fff" stroke-width="0.05">&gt;</text><text transform="matrix(0.9305,0.0005,0,1,463.30,169.29)" font-size="11.60" fill="#fff" stroke="#fff" stroke-width="0.12">Адрес</text><text transform="matrix(0.9228,0.0005,0,1,509.20,169.29)" font-size="11.60" fill="#fff" stroke="#fff" stroke-width="0.12">Код</text><text transform="matrix(0.8643,0.0005,0,1,463.30,183.69)" font-size="11.60" fill="#fff" stroke="#fff" stroke-width="0.12">82FF</text><text transform="matrix(0.8990,0.0005,0,1,508.90,183.69)" font-size="11.60" fill="#15294a" stroke="#15294a" stroke-width="0.34">00</text><text transform="matrix(0.8440,0.0005,0,1,463.30,198.29)" font-size="11.60" fill="#fff" stroke="#fff" stroke-width="0.12">82FE</text><text transform="matrix(0.8990,0.0005,0,1,508.90,198.29)" font-size="11.60" fill="#15294a" stroke="#15294a" stroke-width="0.34">00</text><text transform="matrix(0.8249,0.0005,0,1,463.30,212.89)" font-size="11.60" fill="#fff" stroke="#fff" stroke-width="0.12">82FD</text><text transform="matrix(0.8990,0.0005,0,1,508.90,212.89)" font-size="11.60" fill="#15294a" stroke="#15294a" stroke-width="0.34">00</text><text transform="matrix(0.8249,0.0005,0,1,463.30,227.49)" font-size="11.60" fill="#fff" stroke="#fff" stroke-width="0.12">82FC</text><text transform="matrix(0.8990,0.0005,0,1,508.90,227.49)" font-size="11.60" fill="#15294a" stroke="#15294a" stroke-width="0.34">00</text><text transform="matrix(0.8440,0.0005,0,1,463.30,242.09)" font-size="11.60" fill="#fff" stroke="#fff" stroke-width="0.12">82FB</text><text transform="matrix(0.8990,0.0005,0,1,508.90,242.09)" font-size="11.60" fill="#15294a" stroke="#15294a" stroke-width="0.34">00</text><text transform="matrix(0.8639,0.0005,0,1,463.30,256.69)" font-size="11.60" fill="#fff" stroke="#fff" stroke-width="0.12">82FA</text><text transform="matrix(0.8990,0.0005,0,1,508.90,256.69)" font-size="11.60" fill="#15294a" stroke="#15294a" stroke-width="0.34">00</text><text transform="matrix(0.8850,0.0005,0,1,463.30,271.29)" font-size="11.60" fill="#fff" stroke="#fff" stroke-width="0.12">82F9</text><text transform="matrix(0.8990,0.0005,0,1,508.90,271.29)" font-size="11.60" fill="#15294a" stroke="#15294a" stroke-width="0.34">00</text><text transform="matrix(0.8850,0.0005,0,1,463.30,285.89)" font-size="11.60" fill="#fff" stroke="#fff" stroke-width="0.12">82F8</text><text transform="matrix(0.8990,0.0005,0,1,508.90,285.89)" font-size="11.60" fill="#15294a" stroke="#15294a" stroke-width="0.34">00</text><text transform="matrix(0.8850,0.0005,0,1,463.30,300.49)" font-size="11.60" fill="#fff" stroke="#fff" stroke-width="0.12">82F7</text><text transform="matrix(0.8990,0.0005,0,1,508.90,300.49)" font-size="11.60" fill="#15294a" stroke="#15294a" stroke-width="0.34">00</text><text transform="matrix(0.8850,0.0005,0,1,463.30,315.09)" font-size="11.60" fill="#fff" stroke="#fff" stroke-width="0.12">82F6</text><text transform="matrix(0.8990,0.0005,0,1,508.90,315.09)" font-size="11.60" fill="#15294a" stroke="#15294a" stroke-width="0.34">00</text><text transform="matrix(0.8850,0.0005,0,1,463.30,329.69)" font-size="11.60" fill="#fff" stroke="#fff" stroke-width="0.12">82F5</text><text transform="matrix(0.8990,0.0005,0,1,508.90,329.69)" font-size="11.60" fill="#15294a" stroke="#15294a" stroke-width="0.34">00</text><text transform="matrix(0.8850,0.0005,0,1,463.30,344.29)" font-size="11.60" fill="#fff" stroke="#fff" stroke-width="0.12">82F4</text><text transform="matrix(0.8990,0.0005,0,1,508.90,344.29)" font-size="11.60" fill="#15294a" stroke="#15294a" stroke-width="0.34">00</text><text transform="matrix(0.8850,0.0005,0,1,463.30,358.89)" font-size="11.60" fill="#fff" stroke="#fff" stroke-width="0.12">82F3</text><text transform="matrix(0.8990,0.0005,0,1,508.90,358.89)" font-size="11.60" fill="#15294a" stroke="#15294a" stroke-width="0.34">00</text><text transform="matrix(0.8850,0.0005,0,1,463.30,373.49)" font-size="11.60" fill="#fff" stroke="#fff" stroke-width="0.12">82F2</text><text transform="matrix(0.8990,0.0005,0,1,508.90,373.49)" font-size="11.60" fill="#15294a" stroke="#15294a" stroke-width="0.34">00</text><text transform="matrix(0.8850,0.0005,0,1,463.30,388.09)" font-size="11.60" fill="#fff" stroke="#fff" stroke-width="0.12">82F1</text><text transform="matrix(0.8990,0.0005,0,1,508.90,388.09)" font-size="11.60" fill="#15294a" stroke="#15294a" stroke-width="0.34">00</text><text transform="matrix(0.8850,0.0005,0,1,463.30,402.69)" font-size="11.60" fill="#fff" stroke="#fff" stroke-width="0.12">82F0</text><text transform="matrix(0.8990,0.0005,0,1,508.90,402.69)" font-size="11.60" fill="#15294a" stroke="#15294a" stroke-width="0.34">00</text><text transform="matrix(0.8440,0.0005,0,1,463.30,417.29)" font-size="11.60" fill="#fff" stroke="#fff" stroke-width="0.12">82EF</text><text transform="matrix(0.8990,0.0005,0,1,508.90,417.29)" font-size="11.60" fill="#15294a" stroke="#15294a" stroke-width="0.34">00</text><text transform="matrix(0.8246,0.0005,0,1,463.30,431.89)" font-size="11.60" fill="#fff" stroke="#fff" stroke-width="0.12">82EE</text><text transform="matrix(0.8990,0.0005,0,1,508.90,431.89)" font-size="11.60" fill="#15294a" stroke="#15294a" stroke-width="0.34">00</text><text transform="matrix(0.8064,0.0005,0,1,463.30,446.49)" font-size="11.60" fill="#fff" stroke="#fff" stroke-width="0.12">82ED</text><text transform="matrix(0.8990,0.0005,0,1,508.90,446.49)" font-size="11.60" fill="#15294a" stroke="#15294a" stroke-width="0.34">00</text><text transform="matrix(0.8064,0.0005,0,1,463.30,461.09)" font-size="11.60" fill="#fff" stroke="#fff" stroke-width="0.12">82EC</text><text transform="matrix(0.8990,0.0005,0,1,508.90,461.09)" font-size="11.60" fill="#15294a" stroke="#15294a" stroke-width="0.34">00</text><text transform="matrix(0.8246,0.0005,0,1,463.30,475.69)" font-size="11.60" fill="#fff" stroke="#fff" stroke-width="0.12">82EB</text><text transform="matrix(0.8990,0.0005,0,1,508.90,475.69)" font-size="11.60" fill="#15294a" stroke="#15294a" stroke-width="0.34">00</text><text transform="matrix(0.9214,0.0005,0,1,558.20,153.19)" font-size="11.60" fill="#fff" stroke="#fff" stroke-width="0.12">Адрес</text><text transform="matrix(0.8680,0.0005,0,1,600.80,153.19)" font-size="11.60" fill="#fff" stroke="#fff" stroke-width="0.15">0</text><text transform="matrix(0.8680,0.0005,0,1,621.93,153.19)" font-size="11.60" fill="#fff" stroke="#fff" stroke-width="0.15">1</text><text transform="matrix(0.8680,0.0005,0,1,643.06,153.19)" font-size="11.60" fill="#fff" stroke="#fff" stroke-width="0.15">2</text><text transform="matrix(0.8680,0.0005,0,1,664.19,153.19)" font-size="11.60" fill="#fff" stroke="#fff" stroke-width="0.15">3</text><text transform="matrix(0.8680,0.0005,0,1,685.32,153.19)" font-size="11.60" fill="#fff" stroke="#fff" stroke-width="0.15">4</text><text transform="matrix(0.8680,0.0005,0,1,706.45,153.19)" font-size="11.60" fill="#fff" stroke="#fff" stroke-width="0.15">5</text><text transform="matrix(0.8680,0.0005,0,1,727.58,153.19)" font-size="11.60" fill="#fff" stroke="#fff" stroke-width="0.15">6</text><text transform="matrix(0.8680,0.0005,0,1,748.71,153.19)" font-size="11.60" fill="#fff" stroke="#fff" stroke-width="0.15">7</text><text transform="matrix(0.9068,0.0005,0,1,558.20,167.99)" font-size="11.60" fill="#fff" stroke="#fff" stroke-width="0.12">8200</text><text transform="matrix(0.8835,0.0005,0,1,601.00,167.99)" font-size="11.60" fill="#15294a" stroke="#15294a" stroke-width="0.34">00</text><text transform="matrix(0.8835,0.0005,0,1,622.13,167.99)" font-size="11.60" fill="#15294a" stroke="#15294a" stroke-width="0.34">00</text><text transform="matrix(0.8835,0.0005,0,1,643.26,167.99)" font-size="11.60" fill="#15294a" stroke="#15294a" stroke-width="0.34">00</text><text transform="matrix(0.8835,0.0005,0,1,664.39,167.99)" font-size="11.60" fill="#15294a" stroke="#15294a" stroke-width="0.34">00</text><text transform="matrix(0.8835,0.0005,0,1,685.52,167.99)" font-size="11.60" fill="#15294a" stroke="#15294a" stroke-width="0.34">00</text><text transform="matrix(0.8835,0.0005,0,1,706.65,167.99)" font-size="11.60" fill="#15294a" stroke="#15294a" stroke-width="0.34">00</text><text transform="matrix(0.8835,0.0005,0,1,727.78,167.99)" font-size="11.60" fill="#15294a" stroke="#15294a" stroke-width="0.34">00</text><text transform="matrix(0.8835,0.0005,0,1,748.91,167.99)" font-size="11.60" fill="#15294a" stroke="#15294a" stroke-width="0.34">00</text><text transform="matrix(0.9068,0.0005,0,1,558.20,182.59)" font-size="11.60" fill="#fff" stroke="#fff" stroke-width="0.12">8210</text><text transform="matrix(0.8835,0.0005,0,1,601.00,182.59)" font-size="11.60" fill="#15294a" stroke="#15294a" stroke-width="0.34">00</text><text transform="matrix(0.8835,0.0005,0,1,622.13,182.59)" font-size="11.60" fill="#15294a" stroke="#15294a" stroke-width="0.34">00</text><text transform="matrix(0.8835,0.0005,0,1,643.26,182.59)" font-size="11.60" fill="#15294a" stroke="#15294a" stroke-width="0.34">00</text><text transform="matrix(0.8835,0.0005,0,1,664.39,182.59)" font-size="11.60" fill="#15294a" stroke="#15294a" stroke-width="0.34">00</text><text transform="matrix(0.8835,0.0005,0,1,685.52,182.59)" font-size="11.60" fill="#15294a" stroke="#15294a" stroke-width="0.34">00</text><text transform="matrix(0.8835,0.0005,0,1,706.65,182.59)" font-size="11.60" fill="#15294a" stroke="#15294a" stroke-width="0.34">00</text><text transform="matrix(0.8835,0.0005,0,1,727.78,182.59)" font-size="11.60" fill="#15294a" stroke="#15294a" stroke-width="0.34">00</text><text transform="matrix(0.8835,0.0005,0,1,748.91,182.59)" font-size="11.60" fill="#15294a" stroke="#15294a" stroke-width="0.34">00</text><text transform="matrix(0.9068,0.0005,0,1,558.20,197.19)" font-size="11.60" fill="#fff" stroke="#fff" stroke-width="0.12">8220</text><text transform="matrix(0.8835,0.0005,0,1,601.00,197.19)" font-size="11.60" fill="#15294a" stroke="#15294a" stroke-width="0.34">00</text><text transform="matrix(0.8835,0.0005,0,1,622.13,197.19)" font-size="11.60" fill="#15294a" stroke="#15294a" stroke-width="0.34">00</text><text transform="matrix(0.8835,0.0005,0,1,643.26,197.19)" font-size="11.60" fill="#15294a" stroke="#15294a" stroke-width="0.34">00</text><text transform="matrix(0.8835,0.0005,0,1,664.39,197.19)" font-size="11.60" fill="#15294a" stroke="#15294a" stroke-width="0.34">00</text><text transform="matrix(0.8835,0.0005,0,1,685.52,197.19)" font-size="11.60" fill="#15294a" stroke="#15294a" stroke-width="0.34">00</text><text transform="matrix(0.8835,0.0005,0,1,706.65,197.19)" font-size="11.60" fill="#15294a" stroke="#15294a" stroke-width="0.34">00</text><text transform="matrix(0.8835,0.0005,0,1,727.78,197.19)" font-size="11.60" fill="#15294a" stroke="#15294a" stroke-width="0.34">00</text><text transform="matrix(0.8835,0.0005,0,1,748.91,197.19)" font-size="11.60" fill="#15294a" stroke="#15294a" stroke-width="0.34">00</text><text transform="matrix(0.9068,0.0005,0,1,558.20,211.79)" font-size="11.60" fill="#fff" stroke="#fff" stroke-width="0.12">8230</text><text transform="matrix(0.8835,0.0005,0,1,601.00,211.79)" font-size="11.60" fill="#15294a" stroke="#15294a" stroke-width="0.34">00</text><text transform="matrix(0.8835,0.0005,0,1,622.13,211.79)" font-size="11.60" fill="#15294a" stroke="#15294a" stroke-width="0.34">00</text><text transform="matrix(0.8835,0.0005,0,1,643.26,211.79)" font-size="11.60" fill="#15294a" stroke="#15294a" stroke-width="0.34">00</text><text transform="matrix(0.8835,0.0005,0,1,664.39,211.79)" font-size="11.60" fill="#15294a" stroke="#15294a" stroke-width="0.34">00</text><text transform="matrix(0.8835,0.0005,0,1,685.52,211.79)" font-size="11.60" fill="#15294a" stroke="#15294a" stroke-width="0.34">00</text><text transform="matrix(0.8835,0.0005,0,1,706.65,211.79)" font-size="11.60" fill="#15294a" stroke="#15294a" stroke-width="0.34">00</text><text transform="matrix(0.8835,0.0005,0,1,727.78,211.79)" font-size="11.60" fill="#15294a" stroke="#15294a" stroke-width="0.34">00</text><text transform="matrix(0.8835,0.0005,0,1,748.91,211.79)" font-size="11.60" fill="#15294a" stroke="#15294a" stroke-width="0.34">00</text><text transform="matrix(0.9068,0.0005,0,1,558.20,226.39)" font-size="11.60" fill="#fff" stroke="#fff" stroke-width="0.12">8240</text><text transform="matrix(0.8835,0.0005,0,1,601.00,226.39)" font-size="11.60" fill="#15294a" stroke="#15294a" stroke-width="0.34">00</text><text transform="matrix(0.8835,0.0005,0,1,622.13,226.39)" font-size="11.60" fill="#15294a" stroke="#15294a" stroke-width="0.34">00</text><text transform="matrix(0.8835,0.0005,0,1,643.26,226.39)" font-size="11.60" fill="#15294a" stroke="#15294a" stroke-width="0.34">00</text><text transform="matrix(0.8835,0.0005,0,1,664.39,226.39)" font-size="11.60" fill="#15294a" stroke="#15294a" stroke-width="0.34">00</text><text transform="matrix(0.8835,0.0005,0,1,685.52,226.39)" font-size="11.60" fill="#15294a" stroke="#15294a" stroke-width="0.34">00</text><text transform="matrix(0.8835,0.0005,0,1,706.65,226.39)" font-size="11.60" fill="#15294a" stroke="#15294a" stroke-width="0.34">00</text><text transform="matrix(0.8835,0.0005,0,1,727.78,226.39)" font-size="11.60" fill="#15294a" stroke="#15294a" stroke-width="0.34">00</text><text transform="matrix(0.8835,0.0005,0,1,748.91,226.39)" font-size="11.60" fill="#15294a" stroke="#15294a" stroke-width="0.34">00</text><text transform="matrix(0.9068,0.0005,0,1,558.20,240.99)" font-size="11.60" fill="#fff" stroke="#fff" stroke-width="0.12">8250</text><text transform="matrix(0.8835,0.0005,0,1,601.00,240.99)" font-size="11.60" fill="#15294a" stroke="#15294a" stroke-width="0.34">00</text><text transform="matrix(0.8835,0.0005,0,1,622.13,240.99)" font-size="11.60" fill="#15294a" stroke="#15294a" stroke-width="0.34">00</text><text transform="matrix(0.8835,0.0005,0,1,643.26,240.99)" font-size="11.60" fill="#15294a" stroke="#15294a" stroke-width="0.34">00</text><text transform="matrix(0.8835,0.0005,0,1,664.39,240.99)" font-size="11.60" fill="#15294a" stroke="#15294a" stroke-width="0.34">00</text><text transform="matrix(0.8835,0.0005,0,1,685.52,240.99)" font-size="11.60" fill="#15294a" stroke="#15294a" stroke-width="0.34">00</text><text transform="matrix(0.8835,0.0005,0,1,706.65,240.99)" font-size="11.60" fill="#15294a" stroke="#15294a" stroke-width="0.34">00</text><text transform="matrix(0.8835,0.0005,0,1,727.78,240.99)" font-size="11.60" fill="#15294a" stroke="#15294a" stroke-width="0.34">00</text><text transform="matrix(0.8835,0.0005,0,1,748.91,240.99)" font-size="11.60" fill="#15294a" stroke="#15294a" stroke-width="0.34">00</text><text transform="matrix(0.9068,0.0005,0,1,558.20,255.59)" font-size="11.60" fill="#fff" stroke="#fff" stroke-width="0.12">8260</text><text transform="matrix(0.8835,0.0005,0,1,601.00,255.59)" font-size="11.60" fill="#15294a" stroke="#15294a" stroke-width="0.34">00</text><text transform="matrix(0.8835,0.0005,0,1,622.13,255.59)" font-size="11.60" fill="#15294a" stroke="#15294a" stroke-width="0.34">00</text><text transform="matrix(0.8835,0.0005,0,1,643.26,255.59)" font-size="11.60" fill="#15294a" stroke="#15294a" stroke-width="0.34">00</text><text transform="matrix(0.8835,0.0005,0,1,664.39,255.59)" font-size="11.60" fill="#15294a" stroke="#15294a" stroke-width="0.34">00</text><text transform="matrix(0.8835,0.0005,0,1,685.52,255.59)" font-size="11.60" fill="#15294a" stroke="#15294a" stroke-width="0.34">00</text><text transform="matrix(0.8835,0.0005,0,1,706.65,255.59)" font-size="11.60" fill="#15294a" stroke="#15294a" stroke-width="0.34">00</text><text transform="matrix(0.8835,0.0005,0,1,727.78,255.59)" font-size="11.60" fill="#15294a" stroke="#15294a" stroke-width="0.34">00</text><text transform="matrix(0.8835,0.0005,0,1,748.91,255.59)" font-size="11.60" fill="#15294a" stroke="#15294a" stroke-width="0.34">00</text><text transform="matrix(0.9068,0.0005,0,1,558.20,270.19)" font-size="11.60" fill="#fff" stroke="#fff" stroke-width="0.12">8270</text><text transform="matrix(0.8835,0.0005,0,1,601.00,270.19)" font-size="11.60" fill="#15294a" stroke="#15294a" stroke-width="0.34">00</text><text transform="matrix(0.8835,0.0005,0,1,622.13,270.19)" font-size="11.60" fill="#15294a" stroke="#15294a" stroke-width="0.34">00</text><text transform="matrix(0.8835,0.0005,0,1,643.26,270.19)" font-size="11.60" fill="#15294a" stroke="#15294a" stroke-width="0.34">00</text><text transform="matrix(0.8835,0.0005,0,1,664.39,270.19)" font-size="11.60" fill="#15294a" stroke="#15294a" stroke-width="0.34">00</text><text transform="matrix(0.8835,0.0005,0,1,685.52,270.19)" font-size="11.60" fill="#15294a" stroke="#15294a" stroke-width="0.34">00</text><text transform="matrix(0.8835,0.0005,0,1,706.65,270.19)" font-size="11.60" fill="#15294a" stroke="#15294a" stroke-width="0.34">00</text><text transform="matrix(0.8835,0.0005,0,1,727.78,270.19)" font-size="11.60" fill="#15294a" stroke="#15294a" stroke-width="0.34">00</text><text transform="matrix(0.8835,0.0005,0,1,748.91,270.19)" font-size="11.60" fill="#15294a" stroke="#15294a" stroke-width="0.34">00</text><text transform="matrix(0.9068,0.0005,0,1,558.20,284.79)" font-size="11.60" fill="#fff" stroke="#fff" stroke-width="0.12">8280</text><text transform="matrix(0.8835,0.0005,0,1,601.00,284.79)" font-size="11.60" fill="#15294a" stroke="#15294a" stroke-width="0.34">00</text><text transform="matrix(0.8835,0.0005,0,1,622.13,284.79)" font-size="11.60" fill="#15294a" stroke="#15294a" stroke-width="0.34">00</text><text transform="matrix(0.8835,0.0005,0,1,643.26,284.79)" font-size="11.60" fill="#15294a" stroke="#15294a" stroke-width="0.34">00</text><text transform="matrix(0.8835,0.0005,0,1,664.39,284.79)" font-size="11.60" fill="#15294a" stroke="#15294a" stroke-width="0.34">00</text><text transform="matrix(0.8835,0.0005,0,1,685.52,284.79)" font-size="11.60" fill="#15294a" stroke="#15294a" stroke-width="0.34">00</text><text transform="matrix(0.8835,0.0005,0,1,706.65,284.79)" font-size="11.60" fill="#15294a" stroke="#15294a" stroke-width="0.34">00</text><text transform="matrix(0.8835,0.0005,0,1,727.78,284.79)" font-size="11.60" fill="#15294a" stroke="#15294a" stroke-width="0.34">00</text><text transform="matrix(0.8835,0.0005,0,1,748.91,284.79)" font-size="11.60" fill="#15294a" stroke="#15294a" stroke-width="0.34">00</text><text transform="matrix(0.9068,0.0005,0,1,558.20,299.39)" font-size="11.60" fill="#fff" stroke="#fff" stroke-width="0.12">8290</text><text transform="matrix(0.8835,0.0005,0,1,601.00,299.39)" font-size="11.60" fill="#15294a" stroke="#15294a" stroke-width="0.34">00</text><text transform="matrix(0.8835,0.0005,0,1,622.13,299.39)" font-size="11.60" fill="#15294a" stroke="#15294a" stroke-width="0.34">00</text><text transform="matrix(0.8835,0.0005,0,1,643.26,299.39)" font-size="11.60" fill="#15294a" stroke="#15294a" stroke-width="0.34">00</text><text transform="matrix(0.8835,0.0005,0,1,664.39,299.39)" font-size="11.60" fill="#15294a" stroke="#15294a" stroke-width="0.34">00</text><text transform="matrix(0.8835,0.0005,0,1,685.52,299.39)" font-size="11.60" fill="#15294a" stroke="#15294a" stroke-width="0.34">00</text><text transform="matrix(0.8835,0.0005,0,1,706.65,299.39)" font-size="11.60" fill="#15294a" stroke="#15294a" stroke-width="0.34">00</text><text transform="matrix(0.8835,0.0005,0,1,727.78,299.39)" font-size="11.60" fill="#15294a" stroke="#15294a" stroke-width="0.34">00</text><text transform="matrix(0.8835,0.0005,0,1,748.91,299.39)" font-size="11.60" fill="#15294a" stroke="#15294a" stroke-width="0.34">00</text><text transform="matrix(0.8637,0.0005,0,1,558.20,313.99)" font-size="11.60" fill="#fff" stroke="#fff" stroke-width="0.12">82A0</text><text transform="matrix(0.8835,0.0005,0,1,601.00,313.99)" font-size="11.60" fill="#15294a" stroke="#15294a" stroke-width="0.34">00</text><text transform="matrix(0.8835,0.0005,0,1,622.13,313.99)" font-size="11.60" fill="#15294a" stroke="#15294a" stroke-width="0.34">00</text><text transform="matrix(0.8835,0.0005,0,1,643.26,313.99)" font-size="11.60" fill="#15294a" stroke="#15294a" stroke-width="0.34">00</text><text transform="matrix(0.8835,0.0005,0,1,664.39,313.99)" font-size="11.60" fill="#15294a" stroke="#15294a" stroke-width="0.34">00</text><text transform="matrix(0.8835,0.0005,0,1,685.52,313.99)" font-size="11.60" fill="#15294a" stroke="#15294a" stroke-width="0.34">00</text><text transform="matrix(0.8835,0.0005,0,1,706.65,313.99)" font-size="11.60" fill="#15294a" stroke="#15294a" stroke-width="0.34">00</text><text transform="matrix(0.8835,0.0005,0,1,727.78,313.99)" font-size="11.60" fill="#15294a" stroke="#15294a" stroke-width="0.34">00</text><text transform="matrix(0.8835,0.0005,0,1,748.91,313.99)" font-size="11.60" fill="#15294a" stroke="#15294a" stroke-width="0.34">00</text><text transform="matrix(0.8637,0.0005,0,1,558.20,328.59)" font-size="11.60" fill="#fff" stroke="#fff" stroke-width="0.12">82B0</text><text transform="matrix(0.8835,0.0005,0,1,601.00,328.59)" font-size="11.60" fill="#15294a" stroke="#15294a" stroke-width="0.34">00</text><text transform="matrix(0.8835,0.0005,0,1,622.13,328.59)" font-size="11.60" fill="#15294a" stroke="#15294a" stroke-width="0.34">00</text><text transform="matrix(0.8835,0.0005,0,1,643.26,328.59)" font-size="11.60" fill="#15294a" stroke="#15294a" stroke-width="0.34">00</text><text transform="matrix(0.8835,0.0005,0,1,664.39,328.59)" font-size="11.60" fill="#15294a" stroke="#15294a" stroke-width="0.34">00</text><text transform="matrix(0.8835,0.0005,0,1,685.52,328.59)" font-size="11.60" fill="#15294a" stroke="#15294a" stroke-width="0.34">00</text><text transform="matrix(0.8835,0.0005,0,1,706.65,328.59)" font-size="11.60" fill="#15294a" stroke="#15294a" stroke-width="0.34">00</text><text transform="matrix(0.8835,0.0005,0,1,727.78,328.59)" font-size="11.60" fill="#15294a" stroke="#15294a" stroke-width="0.34">00</text><text transform="matrix(0.8835,0.0005,0,1,748.91,328.59)" font-size="11.60" fill="#15294a" stroke="#15294a" stroke-width="0.34">00</text><text transform="matrix(0.8438,0.0005,0,1,558.20,343.19)" font-size="11.60" fill="#fff" stroke="#fff" stroke-width="0.12">82C0</text><text transform="matrix(0.8835,0.0005,0,1,601.00,343.19)" font-size="11.60" fill="#15294a" stroke="#15294a" stroke-width="0.34">00</text><text transform="matrix(0.8835,0.0005,0,1,622.13,343.19)" font-size="11.60" fill="#15294a" stroke="#15294a" stroke-width="0.34">00</text><text transform="matrix(0.8835,0.0005,0,1,643.26,343.19)" font-size="11.60" fill="#15294a" stroke="#15294a" stroke-width="0.34">00</text><text transform="matrix(0.8835,0.0005,0,1,664.39,343.19)" font-size="11.60" fill="#15294a" stroke="#15294a" stroke-width="0.34">00</text><text transform="matrix(0.8835,0.0005,0,1,685.52,343.19)" font-size="11.60" fill="#15294a" stroke="#15294a" stroke-width="0.34">00</text><text transform="matrix(0.8835,0.0005,0,1,706.65,343.19)" font-size="11.60" fill="#15294a" stroke="#15294a" stroke-width="0.34">00</text><text transform="matrix(0.8835,0.0005,0,1,727.78,343.19)" font-size="11.60" fill="#15294a" stroke="#15294a" stroke-width="0.34">00</text><text transform="matrix(0.8835,0.0005,0,1,748.91,343.19)" font-size="11.60" fill="#15294a" stroke="#15294a" stroke-width="0.34">00</text><text transform="matrix(0.8438,0.0005,0,1,558.20,357.79)" font-size="11.60" fill="#fff" stroke="#fff" stroke-width="0.12">82D0</text><text transform="matrix(0.8835,0.0005,0,1,601.00,357.79)" font-size="11.60" fill="#15294a" stroke="#15294a" stroke-width="0.34">00</text><text transform="matrix(0.8835,0.0005,0,1,622.13,357.79)" font-size="11.60" fill="#15294a" stroke="#15294a" stroke-width="0.34">00</text><text transform="matrix(0.8835,0.0005,0,1,643.26,357.79)" font-size="11.60" fill="#15294a" stroke="#15294a" stroke-width="0.34">00</text><text transform="matrix(0.8835,0.0005,0,1,664.39,357.79)" font-size="11.60" fill="#15294a" stroke="#15294a" stroke-width="0.34">00</text><text transform="matrix(0.8835,0.0005,0,1,685.52,357.79)" font-size="11.60" fill="#15294a" stroke="#15294a" stroke-width="0.34">00</text><text transform="matrix(0.8835,0.0005,0,1,706.65,357.79)" font-size="11.60" fill="#15294a" stroke="#15294a" stroke-width="0.34">00</text><text transform="matrix(0.8835,0.0005,0,1,727.78,357.79)" font-size="11.60" fill="#15294a" stroke="#15294a" stroke-width="0.34">00</text><text transform="matrix(0.8835,0.0005,0,1,748.91,357.79)" font-size="11.60" fill="#15294a" stroke="#15294a" stroke-width="0.34">00</text><text transform="matrix(0.8637,0.0005,0,1,558.20,372.39)" font-size="11.60" fill="#fff" stroke="#fff" stroke-width="0.12">82E0</text><text transform="matrix(0.8835,0.0005,0,1,601.00,372.39)" font-size="11.60" fill="#15294a" stroke="#15294a" stroke-width="0.34">00</text><text transform="matrix(0.8835,0.0005,0,1,622.13,372.39)" font-size="11.60" fill="#15294a" stroke="#15294a" stroke-width="0.34">00</text><text transform="matrix(0.8835,0.0005,0,1,643.26,372.39)" font-size="11.60" fill="#15294a" stroke="#15294a" stroke-width="0.34">00</text><text transform="matrix(0.8835,0.0005,0,1,664.39,372.39)" font-size="11.60" fill="#15294a" stroke="#15294a" stroke-width="0.34">00</text><text transform="matrix(0.8835,0.0005,0,1,685.52,372.39)" font-size="11.60" fill="#15294a" stroke="#15294a" stroke-width="0.34">00</text><text transform="matrix(0.8835,0.0005,0,1,706.65,372.39)" font-size="11.60" fill="#15294a" stroke="#15294a" stroke-width="0.34">00</text><text transform="matrix(0.8835,0.0005,0,1,727.78,372.39)" font-size="11.60" fill="#15294a" stroke="#15294a" stroke-width="0.34">00</text><text transform="matrix(0.8835,0.0005,0,1,748.91,372.39)" font-size="11.60" fill="#15294a" stroke="#15294a" stroke-width="0.34">00</text><text transform="matrix(0.8850,0.0005,0,1,558.20,386.99)" font-size="11.60" fill="#fff" stroke="#fff" stroke-width="0.12">82F0</text><text transform="matrix(0.8835,0.0005,0,1,601.00,386.99)" font-size="11.60" fill="#15294a" stroke="#15294a" stroke-width="0.34">00</text><text transform="matrix(0.8835,0.0005,0,1,622.13,386.99)" font-size="11.60" fill="#15294a" stroke="#15294a" stroke-width="0.34">00</text><text transform="matrix(0.8835,0.0005,0,1,643.26,386.99)" font-size="11.60" fill="#15294a" stroke="#15294a" stroke-width="0.34">00</text><text transform="matrix(0.8835,0.0005,0,1,664.39,386.99)" font-size="11.60" fill="#15294a" stroke="#15294a" stroke-width="0.34">00</text><text transform="matrix(0.8835,0.0005,0,1,685.52,386.99)" font-size="11.60" fill="#15294a" stroke="#15294a" stroke-width="0.34">00</text><text transform="matrix(0.8835,0.0005,0,1,706.65,386.99)" font-size="11.60" fill="#15294a" stroke="#15294a" stroke-width="0.34">00</text><text transform="matrix(0.8835,0.0005,0,1,727.78,386.99)" font-size="11.60" fill="#15294a" stroke="#15294a" stroke-width="0.34">00</text><text transform="matrix(0.8835,0.0005,0,1,748.91,386.99)" font-size="11.60" fill="#15294a" stroke="#15294a" stroke-width="0.34">00</text></svg>
<div style="left:86.90px;top:154.80px;width:349.30px;height:252.20px;background:#1e3855;"></div>
<div style="left:86.90px;top:171.60px;width:2.50px;height:232.40px;background:#25456a;"></div>
<div style="left:89.40px;top:171.60px;width:344.60px;height:233.20px;background:#131d29;"></div>
<div style="left:91.10px;top:171.60px;width:341.00px;height:231.50px;background:#2a4c6f;"></div>
<svg style="left:92.0px;top:158.0px" width="9" height="10" viewBox="0 0 9 10"><path d="M0.3 0.9H8.6L3.6 4.9L8.6 9" fill="none" stroke="#d2d4e8" stroke-width="1.45" stroke-linejoin="miter"/><path d="M1.1 1.6V9.6" stroke="#8d8fba" stroke-width="1.7" stroke-dasharray="0.9 0.8" fill="none"/><path d="M2 9.1H6" stroke="#8d8fba" stroke-width="1" stroke-dasharray="0.9 0.8" fill="none"/></svg>
<svg style="left:390px;top:158px" width="42" height="11" viewBox="0 0 42 11"><path d="M2 5.3H8.2" stroke="#8194aa" stroke-width="0.9" fill="none"/><rect x="18" y="2.6" width="6.4" height="5.2" stroke="#8194aa" stroke-width="0.9" fill="none"/><path d="M35 2.4L40.6 8M40.6 2.4L35 8" stroke="#8194aa" stroke-width="0.9" fill="none"/></svg>
<div style="left:96.80px;top:176.30px;width:49.00px;height:16.70px;background:#244466;border-radius:2px 2px 0 0;"></div>
<div style="left:96.80px;top:192.40px;width:49.00px;height:1.00px;background:#356497;"></div>
<div style="left:96.5px;top:193.6px;width:329px;height:186.5px;border:1px solid #2f5277;border-radius:2px;box-sizing:border-box"></div>
<div style="left:108.60px;top:227.80px;width:45.60px;height:16.00px;background:#a8bbcf;"></div>
<div style="left:154.20px;top:226.60px;width:11.80px;height:18.10px;background:#1e1e1e;"></div>
<svg style="left:157.50px;top:228.65px" width="6" height="14" viewBox="0 0 6 14"><path d="M0.9 4.1L3 1.4L5.1 4.1Z" fill="#060606"/><path d="M0.9 10.4L3 12.9L5.1 10.4Z" fill="#060606"/></svg>
<div style="left:108.60px;top:282.10px;width:45.60px;height:15.70px;background:#a8bbcf;"></div>
<div style="left:154.20px;top:280.90px;width:11.80px;height:17.80px;background:#1e1e1e;"></div>
<svg style="left:157.50px;top:282.80px" width="6" height="14" viewBox="0 0 6 14"><path d="M0.9 4.1L3 1.4L5.1 4.1Z" fill="#060606"/><path d="M0.9 10.4L3 12.9L5.1 10.4Z" fill="#060606"/></svg>
<svg style="left:266px;top:221px" width="11" height="10" viewBox="0 0 11 10"><rect x="0.9" y="0.7" width="8.3" height="7.6" rx="0.6" fill="#7db3e6"/><path d="M2.7 4.9L4.4 6.7L7.8 2.1" fill="none" stroke="#1b3150" stroke-width="1.15"/></svg>
<svg style="left:266px;top:256px" width="11" height="11" viewBox="0 0 11 11"><rect x="0.9" y="1.4" width="8.3" height="7.7" rx="0.6" fill="#23405f"/></svg>
<div style="left:132.00px;top:335.70px;width:252.00px;height:15.50px;background:#a4b8cb;"></div>
<svg style="left:375px;top:340.5px" width="7" height="6" viewBox="0 0 7 6"><path d="M1.0 1.6L3.45 3.9L5.9 1.6" fill="none" stroke="#2c4868" stroke-width="1.25"/></svg>
<div style="left:91.10px;top:381.90px;width:93.90px;height:16.70px;background:#3f5e81;border-radius:1px;"></div>
<div style="left:346.70px;top:381.80px;width:79.60px;height:16.90px;background:#3f5e81;border-radius:1px;"></div>
<svg class="t" width="750" height="462" viewBox="0 0 750 462"><text transform="matrix(0.8980,0.0005,0,1,102.70,166.49)" font-size="8.40" fill="#a3b1c1" font-weight="bold" stroke="#a3b1c1" stroke-width="0.12">Настройки</text><text transform="matrix(0.9445,0.0005,0,1,100.60,189.19)" font-size="11.60" fill="#74abde" stroke="#74abde" stroke-width="0.12">Главная</text><text transform="matrix(0.9328,0.0005,0,1,150.40,189.19)" font-size="11.60" fill="#fff" stroke="#fff" stroke-width="0.12">Шрифт</text><text transform="matrix(0.9449,0.0005,0,1,193.50,189.19)" font-size="11.60" fill="#fff" stroke="#fff" stroke-width="0.12">Редактор кода</text><text transform="matrix(0.9490,0.0005,0,1,107.90,208.99)" font-size="11.60" fill="#fff" stroke="#fff" stroke-width="0.12">Начальный адрес памяти</text><text transform="matrix(0.9106,0.0005,0,1,109.50,239.59)" font-size="11.60" fill="#15294a" stroke="#15294a" stroke-width="0.34">8200</text><text transform="matrix(0.9562,0.0005,0,1,107.90,272.99)" font-size="11.60" fill="#fff" stroke="#fff" stroke-width="0.12">Конечный адрес памяти</text><text transform="matrix(0.8680,0.0005,0,1,109.50,293.74)" font-size="11.60" fill="#15294a" stroke="#15294a" stroke-width="0.34">82FF</text><text transform="matrix(0.9564,0.0005,0,1,278.40,230.29)" font-size="11.60" fill="#fff" stroke="#fff" stroke-width="0.12">Предупреждать о выходе</text><text transform="matrix(0.9418,0.0005,0,1,278.40,265.79)" font-size="11.60" fill="#fff" stroke="#fff" stroke-width="0.12">Режим разработчика</text><text transform="matrix(0.9587,0.0005,0,1,209.20,318.59)" font-size="11.60" fill="#fff" stroke="#fff" stroke-width="0.12">Стиль приложения</text><text transform="matrix(0.8724,0.0005,0,1,134.00,347.69)" font-size="11.60" fill="#15294a" stroke="#15294a" stroke-width="0.34">Calypso SLE</text><text transform="matrix(0.9446,0.0005,0,1,101.40,394.59)" font-size="11.60" fill="#fff" stroke="#fff" stroke-width="0.12">По умолчанию</text><text transform="matrix(0.8830,0.0005,0,1,379.50,394.59)" font-size="11.60" fill="#fff" stroke="#fff" stroke-width="0.12">OK</text></svg>
</div></body></html>
